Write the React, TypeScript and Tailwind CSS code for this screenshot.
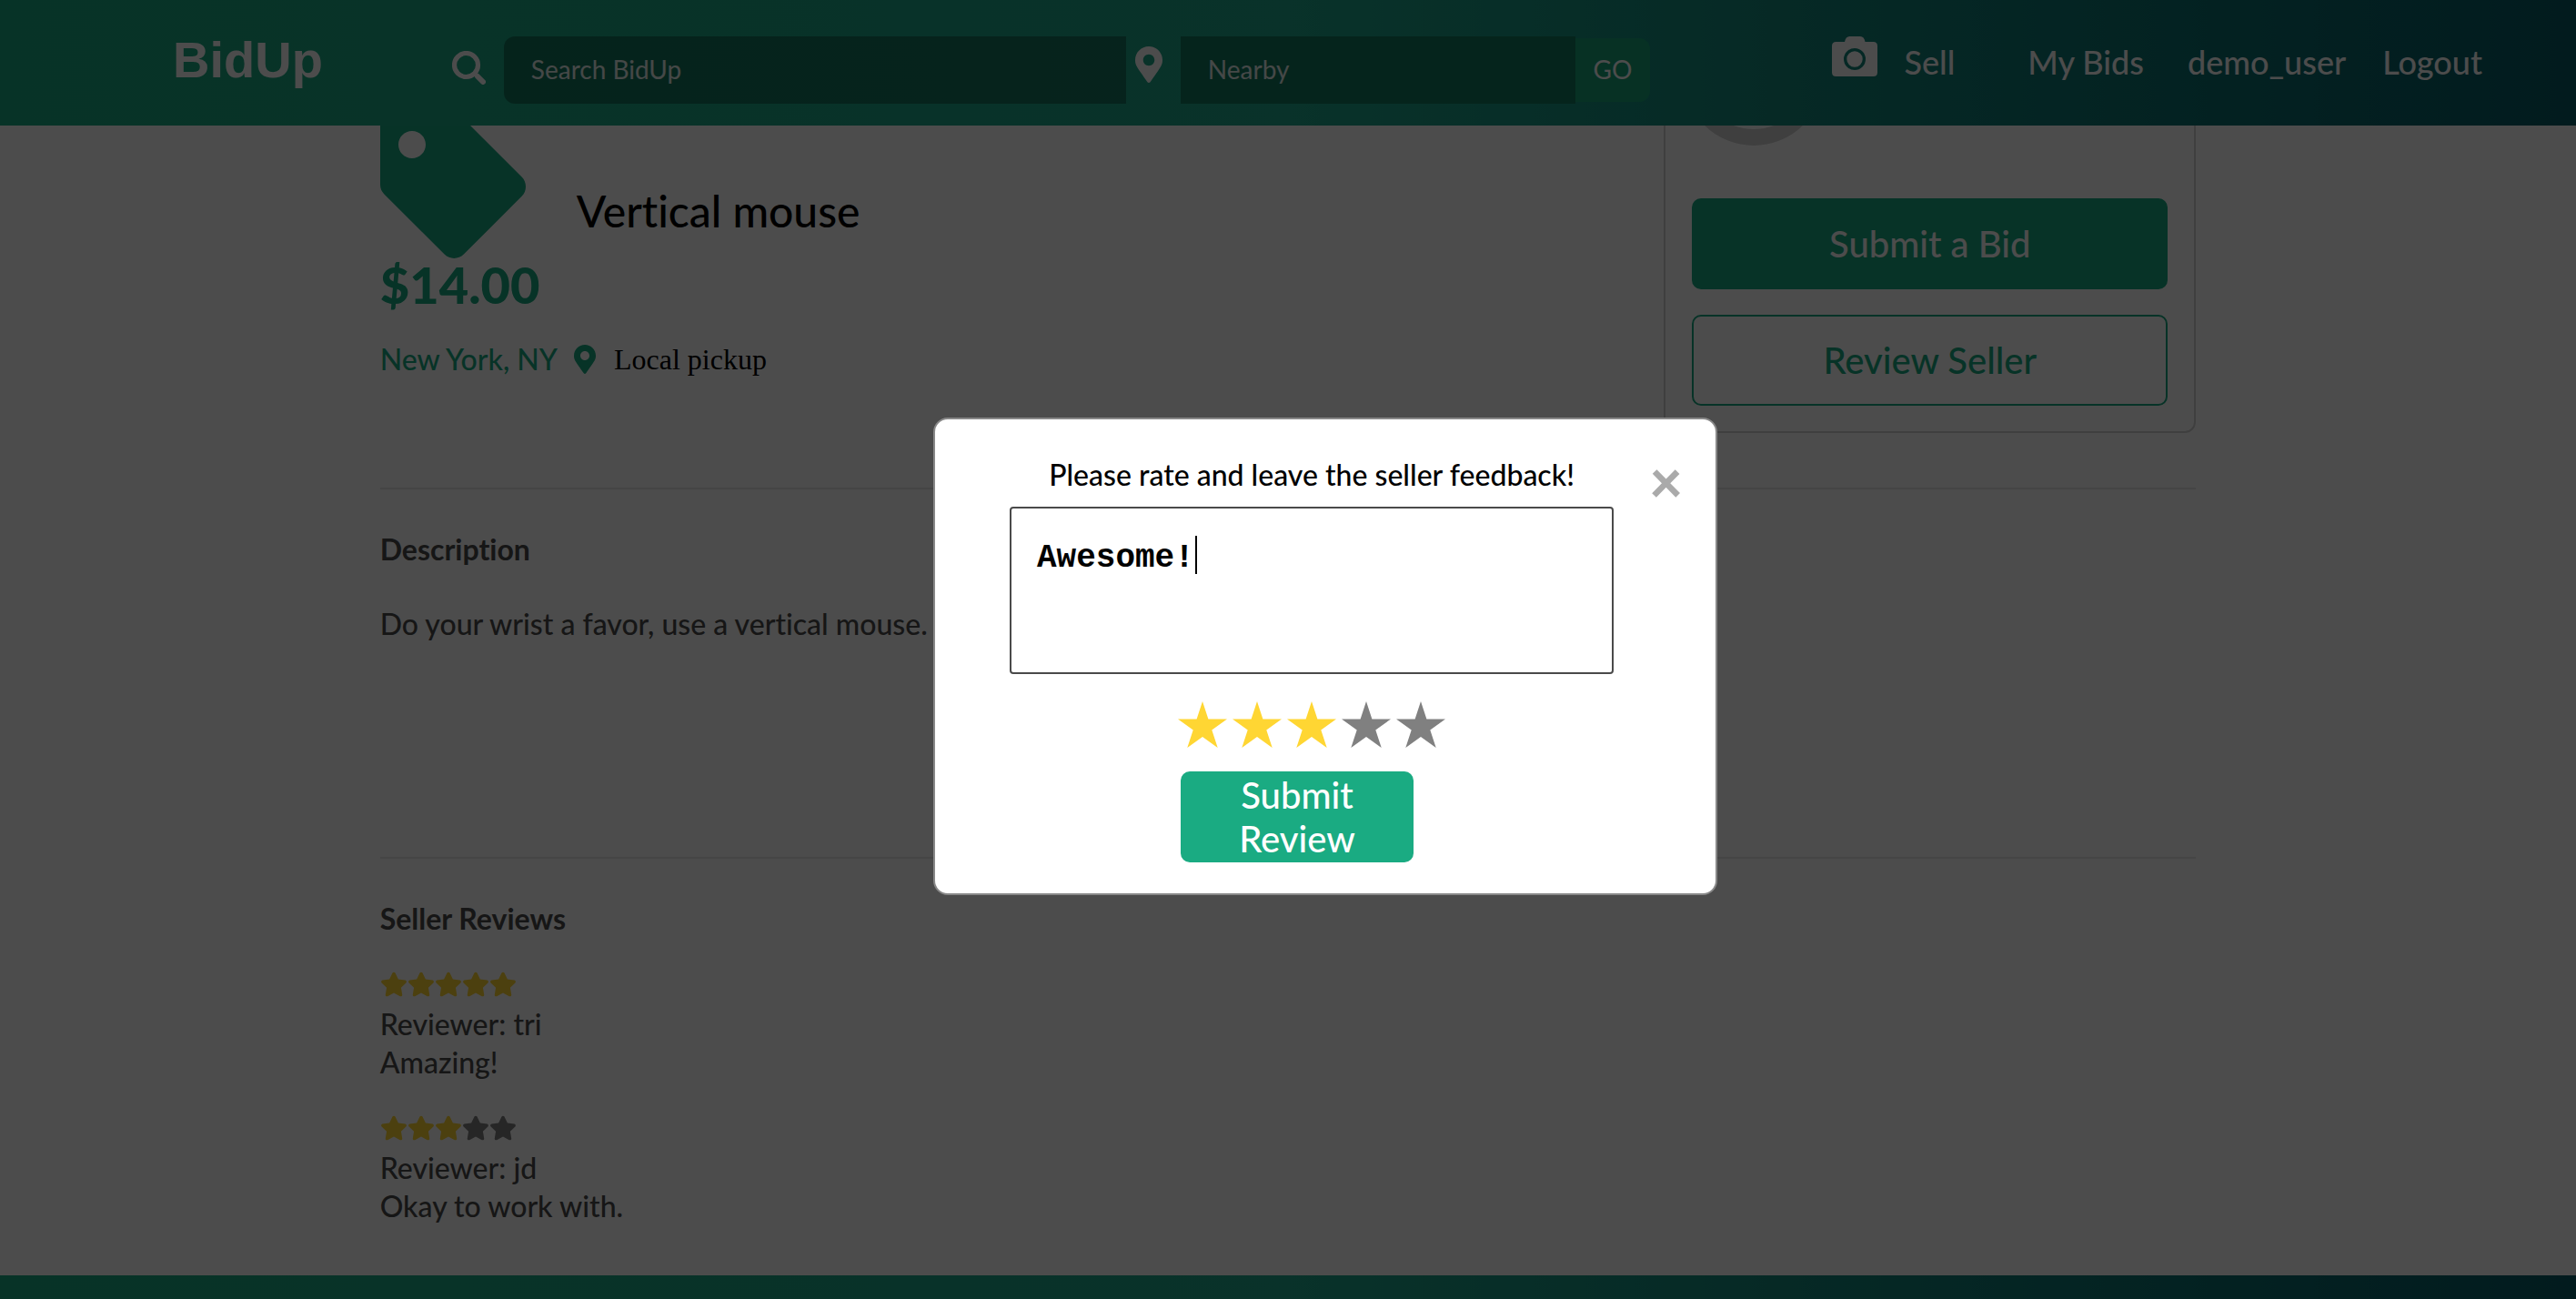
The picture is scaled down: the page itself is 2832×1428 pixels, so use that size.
import React, { useState } from "react";
import { FaMapMarkerAlt, FaStar, FaTag } from "react-icons/fa";

const REVIEWS = [
  { name: "tri", score: 5, text: "Amazing!" },
  { name: "jd", score: 3, text: "Okay to work with." },
];

function SearchIcon() {
  return (
    <svg viewBox="0 0 37 37" fill="none" stroke="currentColor" strokeLinecap="round" className="size-[37px]" aria-hidden="true">
      <circle cx="15.500" cy="15.500" r="13" strokeWidth="5.200" />
      <path d="M25 25l2 2" strokeWidth="4" />
      <path d="M28 28l6 6" strokeWidth="6" />
    </svg>
  );
}

function CameraIcon() {
  return (
    <svg viewBox="0 0 50 44" fill="currentColor" className="h-11 w-[50px]" aria-hidden="true">
      <path
        fillRule="evenodd"
        d="M4.500 6H14Q15 0 19.500 0H31Q35.500 0 36.500 6H45.500Q50 6 50 10.500V39.500Q50 44 45.500 44H4.500Q0 44 0 39.500V10.500Q0 6 4.500 6ZM25 13a12 12 0 1 0 0 24 12 12 0 0 0 0-24ZM25 16.300a8.700 8.700 0 1 1 0 17.400 8.700 8.700 0 0 1 0-17.400Z"
      />
    </svg>
  );
}

function SharpStar({ on }: { on: boolean }) {
  return (
    <svg
      viewBox="0 0 54 51"
      className={on ? "h-[51px] w-[54px] fill-[#ffd633]" : "h-[51px] w-[54px] fill-[#808080]"}
      aria-hidden="true"
    >
      <path d="M27 0l6.400 19.500H54L37.300 31.500 43.700 51 27 39 10.300 51l6.400-19.500L0 19.500h20.600Z" />
    </svg>
  );
}

function Header() {
  return (
    <header className="relative z-10 flex h-[138px] shrink-0 items-center bg-linear-to-r from-[#1aab82] via-[#1ea88c] via-50% to-[#075c66] pl-[190px] pr-[103px] text-white">
      <a href="#home" className="pb-1.5 font-['Liberation_Sans',sans-serif] text-[56px] font-bold leading-none">
        BidUp
      </a>
      <form className="ml-[142px] flex items-center pt-4" onSubmit={(e) => e.preventDefault()}>
        <label htmlFor="search" className="pb-1.5" aria-label="Search">
          <SearchIcon />
        </label>
        <input
          id="search"
          type="text"
          placeholder="Search BidUp"
          className="ml-5 h-[74px] w-[684px] rounded-l-xl bg-black/30 px-[30px] pb-0.5 text-[28px] placeholder-white/90"
        />
        <label htmlFor="nearby" className="mx-2.5 w-10 pb-3" aria-label="Location">
          <FaMapMarkerAlt className="h-10 w-[30px]" />
        </label>
        <input
          id="nearby"
          type="text"
          placeholder="Nearby"
          className="h-[74px] w-[434px] bg-[#11785f] px-[30px] pb-0.5 text-[28px] placeholder-white/90"
        />
        <button type="submit" className="h-[70px] w-[82px] rounded-r-xl bg-[#18a67a] pb-0.5 text-[28px]">
          GO
        </button>
      </form>
      <nav className="ml-auto flex items-center pb-0.5 text-[36px] font-medium">
        <a href="#sell" className="flex items-center gap-[30px]">
          <span className="pb-3">
            <CameraIcon />
          </span>
          Sell
        </a>
        <a href="#bids" className="ml-20">My Bids</a>
        <a href="#user" className="ml-12">demo_user</a>
        <a href="#logout" className="ml-10">Logout</a>
      </nav>
    </header>
  );
}

function Product() {
  return (
    <section className="flex items-start justify-between">
      <div className="pt-[124px]">
        <div className="flex items-end gap-14">
          <FaTag className="size-40 text-[#1aab82]" />
          <h1 className="pb-5 text-[48px] leading-[64px]">Vertical mouse</h1>
        </div>
        <p className="text-[56px] font-black leading-[58px] text-[#1aab82]">$14.00</p>
        <div className="mt-8 flex items-center text-[32px] leading-[42px]">
          <span className="text-[#1aab82]">New York, NY</span>
          <FaMapMarkerAlt className="ml-[18px] h-8 w-6 text-[#1aab82]" />
          <span className="ml-5 font-['Liberation_Serif',serif]">Local pickup</span>
        </div>
      </div>
      <aside className="flex w-[585px] flex-col rounded-xl border-2 border-[#d3d3d3] px-[29px] pb-7 pt-1">
        <div className="ml-[-9px] size-[154px] rounded-full border-[18px] border-[#d3d3d3]" />
        <button type="button" className="mt-[58px] h-[100px] rounded-[10px] bg-[#1aab82] text-[40px] text-white">
          Submit a Bid
        </button>
        <button type="button" className="mt-7 h-[100px] rounded-[10px] border-2 border-[#1aab82] text-[40px] text-[#1aab82]">
          Review Seller
        </button>
      </aside>
    </section>
  );
}

function ReviewDialog() {
  const [rating, setRating] = useState(3);
  return (
    <div className="fixed inset-0 z-20 flex items-center justify-center bg-black/70 pl-[82px] pt-[14px] font-medium">
      <form
        role="dialog"
        aria-labelledby="review-title"
        onSubmit={(e) => e.preventDefault()}
        className="relative flex w-[862px] flex-col rounded-2xl border-2 border-[#888] bg-white pb-[34px] pl-[82px] pr-[112px] pt-10"
      >
        <label id="review-title" htmlFor="review" className="text-center text-[32px] leading-[42px]">
          Please rate and leave the seller feedback!
        </label>
        <div className="relative mt-[14px] flex">
          <textarea
            id="review"
            defaultValue="Awesome!"
            className="h-[184px] w-full resize-none rounded border-2 border-[#4a4a4a] px-7 pb-6 pt-[34px] font-['Liberation_Mono',monospace] text-[36px] font-bold leading-[42px] outline-none"
          />
          <span className="absolute left-[204px] top-8 h-[42px] w-0.5 bg-black" />
        </div>
        <div className="mt-[30px] flex justify-center gap-1.5">
          {[1, 2, 3, 4, 5].map((n) => (
            <button key={n} type="button" aria-label={`${n} stars`} onClick={() => setRating(n)}>
              <SharpStar on={n <= rating} />
            </button>
          ))}
        </div>
        <button
          type="submit"
          className="ml-[188px] mt-[26px] h-[100px] w-64 rounded-[10px] bg-[#1aab82] px-12 text-[40px] leading-[48px] text-white"
        >
          Submit Review
        </button>
        <button
          type="button"
          aria-label="Close"
          className="absolute right-9 top-9 text-[64px] font-black leading-[64px] text-[#aaa]"
        >
          ×
        </button>
      </form>
    </div>
  );
}

export default function App() {
  return (
    <div className="flex h-screen flex-col overflow-hidden bg-white font-[Lato,sans-serif] text-black [font-variant-ligatures:none]">
      <Header />
      <main className="mx-auto -mt-[138px] w-[70.5%] text-[32px] font-medium leading-[42px]">
        <Product />
        <hr className="mt-[60px] border-t-2 border-[#e6e6e6]" />
        <section className="min-h-[404px] pt-[45px] text-[#4a4a4a]">
          <h2 className="font-bold">Description</h2>
          <p className="mt-10">Do your wrist a favor, use a vertical mouse. The</p>
        </section>
        <hr className="border-t-2 border-[#e6e6e6]" />
        <section className="pt-[45px] text-[#4a4a4a]">
          <h2 className="font-bold">Seller Reviews</h2>
          <ul className="mt-8 flex flex-col gap-8">
            {REVIEWS.map((r) => (
              <li key={r.name}>
                <div className="flex h-[42px] items-center pb-1" role="img" aria-label={`${r.score} out of 5 stars`}>
                  {[1, 2, 3, 4, 5].map((n) => (
                    <FaStar
                      key={n}
                      className={n <= r.score ? "size-[30px] text-[#ffd633]" : "size-[30px] text-[#808080]"}
                    />
                  ))}
                </div>
                <p>Reviewer: {r.name}</p>
                <p>{r.text}</p>
              </li>
            ))}
          </ul>
        </section>
      </main>
      <footer className="mt-[55px] min-h-[26px] flex-1 bg-linear-to-r from-[#1aab82] via-[#1ea88c] via-50% to-[#075c66]" />
      <ReviewDialog />
    </div>
  );
}
